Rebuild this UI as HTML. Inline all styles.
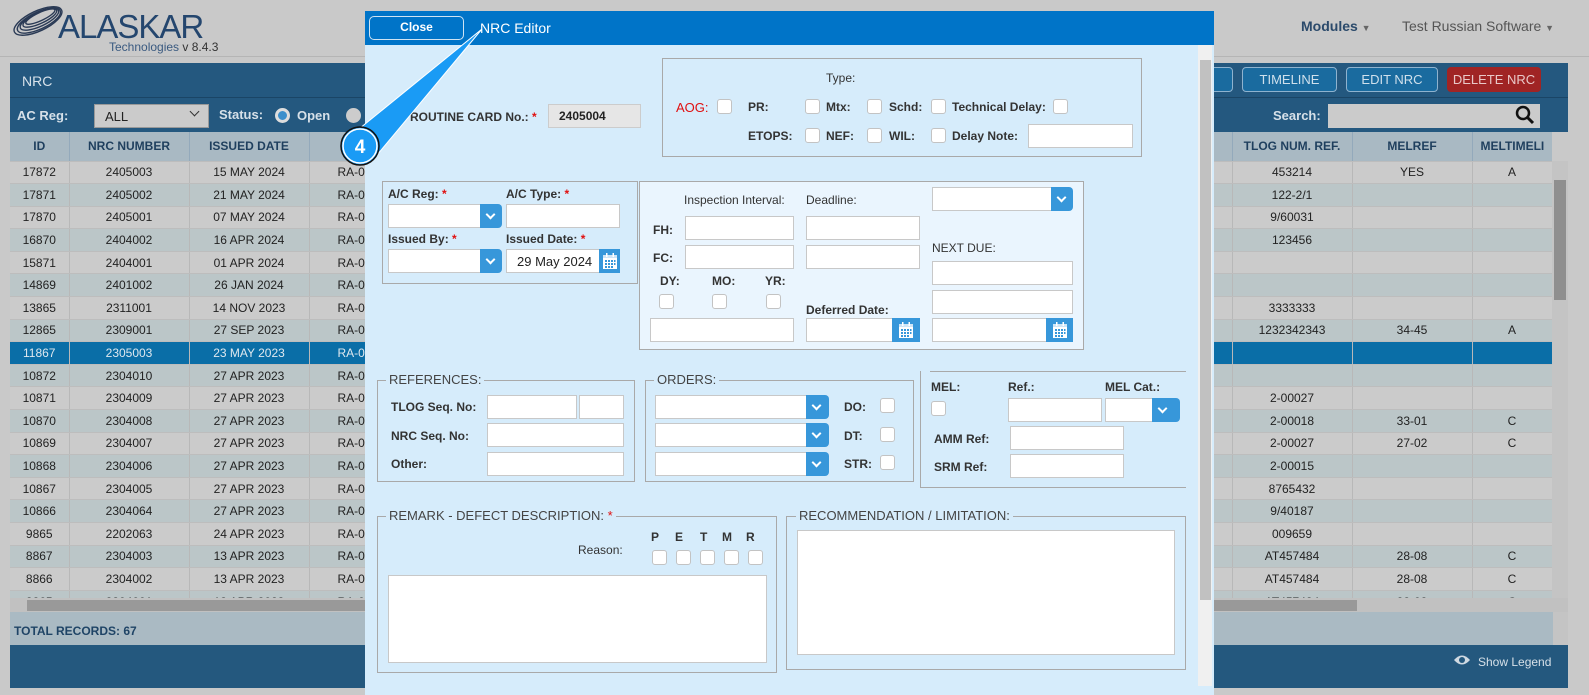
<!DOCTYPE html>
<html><head><meta charset="utf-8">
<style>
*{box-sizing:border-box;margin:0;padding:0}
body{width:1589px;height:695px;overflow:hidden;background:#c9c9c9;font-family:"Liberation Sans",Arial,sans-serif;font-size:12px;color:#222;position:relative}
.a{position:absolute}
.hdr{left:0;top:0;width:1589px;height:57px;background:#c9c9c9;border-bottom:1px solid #b5b5b5}
table{border-collapse:collapse;table-layout:fixed}
td,th{height:22.6px;text-align:center;border-right:1px solid #b8b8b8;border-bottom:1px solid #bdbdbd;font-size:12px;white-space:nowrap;overflow:hidden;padding:0}
th{height:29px;background:#a9b9c3;color:#1f3f5e;font-weight:bold;border-right:1px solid #93a9bb}
tr.g td{background:#cbcbcb}
tr.b td{background:#bbc6c8}
tr.s td{background:#0a6ea7;color:#dfe8ef}
.btn{height:25px;border:1px solid #8fb3cf;border-radius:4px;background:#1a6b9f;color:#cfe0ec;font-size:13px;text-align:center;line-height:23px}
.modal{left:365px;top:11px;width:849px;height:684px;background:#d6ecfb}
.lbl{font-weight:bold;font-size:12px;color:#333;white-space:nowrap}
.r{color:#e01010}
.in{background:#fff;border:1px solid #c8c8c8;height:24px}
.cb{width:15px;height:15px;background:#fff;border:1px solid #c3c3c3;border-radius:3px}
.box{border:1px solid #a9a9a9}
.leg{font-size:13px;color:#444;background:#d6ecfb;padding:0 3px;white-space:nowrap}
.sb{background:#3797da;width:22px;height:24px;border-top-right-radius:4px;border-bottom-right-radius:4px}
.sb::after{content:"";position:absolute;left:7px;top:7px;width:5px;height:5px;border-right:2px solid #fff;border-bottom:2px solid #fff;transform:rotate(45deg)}
.cal{background:#3797da;width:21px;height:24px}
.cal svg{position:absolute;left:50%;top:3px;margin-left:-8px}
</style></head><body>

<div class="a hdr"></div>
<svg class="a" style="left:8px;top:4px" width="60" height="36" viewBox="0 0 60 36">
<g fill="none" stroke="#2a3a55" stroke-width="1.4">
<ellipse cx="30" cy="17" rx="26" ry="10" transform="rotate(-25 30 17)"/>
<ellipse cx="31" cy="17" rx="23.5" ry="8.5" transform="rotate(-25 30 17)"/>
<ellipse cx="32" cy="16" rx="21" ry="7" transform="rotate(-25 30 17)"/>
<ellipse cx="33" cy="15" rx="18.5" ry="5.5" transform="rotate(-25 30 17)"/>
<ellipse cx="34" cy="14" rx="16" ry="4" transform="rotate(-25 30 17)"/>
</g></svg>
<div class="a" style="left:58px;top:10px;font-size:33px;color:#24466e;letter-spacing:-1px;line-height:34px">ALASKAR</div>
<div class="a" style="left:109px;top:40px;font-size:12px;color:#3a5a80">Technologies <span style="color:#333">v 8.4.3</span></div>
<div class="a" style="left:1301px;top:18px;font-size:14px;font-weight:bold;color:#2b4a6b">Modules <span style="font-size:9px;color:#666">▼</span></div>
<div class="a" style="left:1402px;top:18px;font-size:14px;color:#555">Test Russian Software <span style="font-size:9px;color:#666">▼</span></div>

<div class="a" style="left:10px;top:63px;width:1558px;height:35px;background:#24587f;border-bottom:1px solid #1a4566"></div>
<div class="a" style="left:22px;top:73px;font-size:14px;color:#d8e2ea">NRC</div>
<div class="a btn" style="left:1180px;top:67px;width:53px"></div>
<div class="a btn" style="left:1242px;top:67px;width:95px">TIMELINE</div>
<div class="a btn" style="left:1346px;top:67px;width:92px">EDIT NRC</div>
<div class="a btn" style="left:1447px;top:67px;width:94px;background:#a02424;border-color:#a02424;color:#e9c8c8">DELETE NRC</div>
<div class="a" style="left:10px;top:98px;width:1558px;height:34px;background:#24587f"></div>
<div class="a lbl" style="left:17px;top:108px;color:#d6e0e8;font-size:13px">AC Reg:</div>
<div class="a" style="left:94px;top:104px;width:115px;height:24px;background:#cbcbcb;border:1px solid #999;padding:4px 10px;font-size:13px">ALL<span style="position:absolute;right:10px;top:3px;width:7px;height:7px;border-right:1.5px solid #333;border-bottom:1.5px solid #333;transform:rotate(45deg)"></span></div>
<div class="a lbl" style="left:219px;top:107px;color:#d6e0e8;font-size:13px">Status:</div>
<div class="a" style="left:275px;top:108px;width:15px;height:15px;border-radius:50%;background:#3b8fcc;border:3px solid #ddd"></div>
<div class="a lbl" style="left:297px;top:108px;color:#d6e0e8;font-size:13px">Open</div>
<div class="a" style="left:346px;top:108px;width:15px;height:15px;border-radius:50%;background:#ccc"></div>
<div class="a lbl" style="left:1273px;top:108px;color:#d6e0e8;font-size:13px">Search:</div>
<div class="a" style="left:1328px;top:104px;width:212px;height:24px;background:#cbcbcb"></div>
<svg class="a" style="left:1515px;top:105px" width="20" height="20" viewBox="0 0 20 20"><circle cx="8" cy="8" r="6" fill="none" stroke="#111" stroke-width="2.5"/><path d="M12.5 12.5L18 18" stroke="#111" stroke-width="3"/></svg>

<div class="a" style="left:10px;top:132px;width:1542px;height:466px;overflow:hidden">
<table style="width:1542px">
<colgroup><col style="width:59px"><col style="width:120px"><col style="width:120px"><col style="width:923px"><col style="width:120px"><col style="width:120px"><col style="width:80px"></colgroup>
<tr><th>ID</th><th>NRC NUMBER</th><th>ISSUED DATE</th><th></th><th>TLOG NUM. REF.</th><th>MELREF</th><th style="text-align:left;padding-left:8px">MELTIMELI</th></tr>
<tr class="g"><td>17872</td><td>2405003</td><td>15 MAY 2024</td><td style="text-align:left;padding-left:28px">RA-0</td><td>453214</td><td>YES</td><td>A</td></tr>
<tr class="b"><td>17871</td><td>2405002</td><td>21 MAY 2024</td><td style="text-align:left;padding-left:28px">RA-0</td><td>122-2/1</td><td></td><td></td></tr>
<tr class="g"><td>17870</td><td>2405001</td><td>07 MAY 2024</td><td style="text-align:left;padding-left:28px">RA-0</td><td>9/60031</td><td></td><td></td></tr>
<tr class="b"><td>16870</td><td>2404002</td><td>16 APR 2024</td><td style="text-align:left;padding-left:28px">RA-0</td><td>123456</td><td></td><td></td></tr>
<tr class="g"><td>15871</td><td>2404001</td><td>01 APR 2024</td><td style="text-align:left;padding-left:28px">RA-0</td><td></td><td></td><td></td></tr>
<tr class="b"><td>14869</td><td>2401002</td><td>26 JAN 2024</td><td style="text-align:left;padding-left:28px">RA-0</td><td></td><td></td><td></td></tr>
<tr class="g"><td>13865</td><td>2311001</td><td>14 NOV 2023</td><td style="text-align:left;padding-left:28px">RA-0</td><td>3333333</td><td></td><td></td></tr>
<tr class="b"><td>12865</td><td>2309001</td><td>27 SEP 2023</td><td style="text-align:left;padding-left:28px">RA-0</td><td>1232342343</td><td>34-45</td><td>A</td></tr>
<tr class="s"><td>11867</td><td>2305003</td><td>23 MAY 2023</td><td style="text-align:left;padding-left:28px">RA-0</td><td></td><td></td><td></td></tr>
<tr class="b"><td>10872</td><td>2304010</td><td>27 APR 2023</td><td style="text-align:left;padding-left:28px">RA-0</td><td></td><td></td><td></td></tr>
<tr class="g"><td>10871</td><td>2304009</td><td>27 APR 2023</td><td style="text-align:left;padding-left:28px">RA-0</td><td>2-00027</td><td></td><td></td></tr>
<tr class="b"><td>10870</td><td>2304008</td><td>27 APR 2023</td><td style="text-align:left;padding-left:28px">RA-0</td><td>2-00018</td><td>33-01</td><td>C</td></tr>
<tr class="g"><td>10869</td><td>2304007</td><td>27 APR 2023</td><td style="text-align:left;padding-left:28px">RA-0</td><td>2-00027</td><td>27-02</td><td>C</td></tr>
<tr class="b"><td>10868</td><td>2304006</td><td>27 APR 2023</td><td style="text-align:left;padding-left:28px">RA-0</td><td>2-00015</td><td></td><td></td></tr>
<tr class="g"><td>10867</td><td>2304005</td><td>27 APR 2023</td><td style="text-align:left;padding-left:28px">RA-0</td><td>8765432</td><td></td><td></td></tr>
<tr class="b"><td>10866</td><td>2304064</td><td>27 APR 2023</td><td style="text-align:left;padding-left:28px">RA-0</td><td>9/40187</td><td></td><td></td></tr>
<tr class="g"><td>9865</td><td>2202063</td><td>24 APR 2023</td><td style="text-align:left;padding-left:28px">RA-0</td><td>009659</td><td></td><td></td></tr>
<tr class="b"><td>8867</td><td>2304003</td><td>13 APR 2023</td><td style="text-align:left;padding-left:28px">RA-0</td><td>AT457484</td><td>28-08</td><td>C</td></tr>
<tr class="g"><td>8866</td><td>2304002</td><td>13 APR 2023</td><td style="text-align:left;padding-left:28px">RA-0</td><td>AT457484</td><td>28-08</td><td>C</td></tr>
<tr class="b"><td>8865</td><td>2304001</td><td>13 APR 2023</td><td style="text-align:left;padding-left:28px">RA-0</td><td>AT457484</td><td>28-08</td><td>C</td></tr>
</table></div>
<div class="a" style="left:1552px;top:161px;width:16px;height:451px;background:#c4c4c4"></div>
<div class="a" style="left:1554px;top:180px;width:12px;height:120px;background:#8f8f8f"></div>
<div class="a" style="left:10px;top:598px;width:1558px;height:14px;background:#c1c1c1"></div>
<div class="a" style="left:27px;top:600px;width:1330px;height:11px;background:#999"></div>
<div class="a" style="left:10px;top:612px;width:1558px;height:33px;background:#aabac3"></div>
<div class="a" style="left:1553px;top:612px;width:15px;height:33px;background:#c4c4c4"></div>
<div class="a lbl" style="left:14px;top:624px;color:#1f4466">TOTAL RECORDS: 67</div>
<div class="a" style="left:10px;top:645px;width:1558px;height:43px;background:#24587e"></div>
<svg class="a" style="left:1453px;top:654px" width="18" height="12" viewBox="0 0 18 12"><path d="M1 6Q9 -3 17 6Q9 15 1 6Z" fill="#cfd9e2"/><circle cx="9" cy="6" r="3" fill="#24587e"/></svg>
<div class="a" style="left:1478px;top:655px;color:#d6e0e8;font-size:12px">Show Legend</div>

<div class="a modal"></div>
<div class="a" style="left:365px;top:11px;width:849px;height:34px;background:#0074c8"></div>
<div class="a" style="left:369px;top:16px;width:95px;height:24px;border:1px solid #cfe3f3;border-radius:5px;color:#fff;font-weight:bold;text-align:center;line-height:21px">Close</div>
<div class="a" style="left:480px;top:20px;color:#fff;font-size:14px">NRC Editor</div>
<div class="a" style="left:1198px;top:45px;width:14px;height:641px;background:#f0f0f0"></div>
<div class="a" style="left:1200px;top:60px;width:11px;height:540px;background:#c1c1c1"></div>

<div class="a lbl" style="left:410px;top:110px">ROUTINE CARD No.: <span class="r">*</span></div>
<div class="a" style="left:548px;top:104px;width:93px;height:24px;background:#e6e6e6;border:1px solid #ccc;padding:4px 10px;font-weight:bold">2405004</div>

<div class="a box" style="left:662px;top:58px;width:480px;height:99px"></div>
<div class="a" style="left:826px;top:71px;color:#333">Type:</div>
<div class="a lbl r" style="left:676px;top:100px;font-weight:normal;font-size:13px">AOG:</div><div class="a cb" style="left:717px;top:99px"></div>
<div class="a lbl" style="left:748px;top:100px">PR:</div><div class="a cb" style="left:805px;top:99px"></div>
<div class="a lbl" style="left:826px;top:100px">Mtx:</div><div class="a cb" style="left:867px;top:99px"></div>
<div class="a lbl" style="left:889px;top:100px">Schd:</div><div class="a cb" style="left:931px;top:99px"></div>
<div class="a lbl" style="left:952px;top:100px">Technical Delay:</div><div class="a cb" style="left:1053px;top:99px"></div>
<div class="a lbl" style="left:748px;top:129px">ETOPS:</div><div class="a cb" style="left:805px;top:128px"></div>
<div class="a lbl" style="left:826px;top:129px">NEF:</div><div class="a cb" style="left:867px;top:128px"></div>
<div class="a lbl" style="left:889px;top:129px">WIL:</div><div class="a cb" style="left:931px;top:128px"></div>
<div class="a lbl" style="left:952px;top:129px">Delay Note:</div><div class="a in" style="left:1028px;top:124px;width:105px"></div>

<div class="a box" style="left:382px;top:181px;width:256px;height:103px"></div>
<div class="a lbl" style="left:388px;top:187px">A/C Reg: <span class="r">*</span></div>
<div class="a lbl" style="left:506px;top:187px">A/C Type: <span class="r">*</span></div>
<div class="a in" style="left:388px;top:204px;width:93px"></div><div class="a sb" style="left:480px;top:204px"></div>
<div class="a in" style="left:506px;top:204px;width:114px"></div>
<div class="a lbl" style="left:388px;top:232px">Issued By: <span class="r">*</span></div>
<div class="a lbl" style="left:506px;top:232px">Issued Date: <span class="r">*</span></div>
<div class="a in" style="left:388px;top:249px;width:93px"></div><div class="a sb" style="left:480px;top:249px"></div>
<div class="a in" style="left:506px;top:249px;width:94px;padding:4px 0 0 10px;font-size:13px">29 May 2024</div>
<div class="a cal" style="left:599px;top:249px"><svg width="16" height="18" viewBox="0 0 16 18"><rect x="1" y="3" width="14" height="14" fill="#fff"/><rect x="1" y="3" width="14" height="3" fill="#cfe6f7"/><g fill="#3797da"><rect x="3" y="8" width="2" height="2"/><rect x="6" y="8" width="2" height="2"/><rect x="9" y="8" width="2" height="2"/><rect x="12" y="8" width="1.5" height="2"/><rect x="3" y="11" width="2" height="2"/><rect x="6" y="11" width="2" height="2"/><rect x="9" y="11" width="2" height="2"/><rect x="12" y="11" width="1.5" height="2"/><rect x="3" y="14" width="2" height="2"/><rect x="6" y="14" width="2" height="2"/><rect x="9" y="14" width="2" height="2"/></g><rect x="4" y="1" width="1.5" height="4" fill="#fff"/><rect x="10.5" y="1" width="1.5" height="4" fill="#fff"/></svg></div>

<div class="a box" style="left:639px;top:181px;width:445px;height:169px;background:#eaf5fe"></div>
<div class="a" style="left:684px;top:193px;color:#333">Inspection Interval:</div>
<div class="a" style="left:806px;top:193px;color:#333">Deadline:</div>
<div class="a in" style="left:932px;top:187px;width:120px"></div><div class="a sb" style="left:1051px;top:187px"></div>
<div class="a lbl" style="left:653px;top:223px">FH:</div><div class="a in" style="left:685px;top:216px;width:109px"></div><div class="a in" style="left:806px;top:216px;width:114px"></div>
<div class="a lbl" style="left:653px;top:251px">FC:</div><div class="a in" style="left:685px;top:245px;width:109px"></div><div class="a in" style="left:806px;top:245px;width:114px"></div>
<div class="a" style="left:932px;top:241px;color:#333">NEXT DUE:</div>
<div class="a lbl" style="left:660px;top:274px">DY:</div><div class="a lbl" style="left:712px;top:274px">MO:</div><div class="a lbl" style="left:765px;top:274px">YR:</div>
<div class="a cb" style="left:659px;top:294px"></div><div class="a cb" style="left:712px;top:294px"></div><div class="a cb" style="left:766px;top:294px"></div>
<div class="a in" style="left:932px;top:261px;width:141px"></div>
<div class="a in" style="left:932px;top:290px;width:141px"></div>
<div class="a lbl" style="left:806px;top:303px">Deferred Date:</div>
<div class="a in" style="left:650px;top:318px;width:144px"></div>
<div class="a in" style="left:806px;top:318px;width:87px"></div>
<div class="a cal" style="left:892px;top:318px;width:28px"><svg width="16" height="18" viewBox="0 0 16 18"><rect x="1" y="3" width="14" height="14" fill="#fff"/><rect x="1" y="3" width="14" height="3" fill="#cfe6f7"/><g fill="#3797da"><rect x="3" y="8" width="2" height="2"/><rect x="6" y="8" width="2" height="2"/><rect x="9" y="8" width="2" height="2"/><rect x="12" y="8" width="1.5" height="2"/><rect x="3" y="11" width="2" height="2"/><rect x="6" y="11" width="2" height="2"/><rect x="9" y="11" width="2" height="2"/><rect x="12" y="11" width="1.5" height="2"/><rect x="3" y="14" width="2" height="2"/><rect x="6" y="14" width="2" height="2"/><rect x="9" y="14" width="2" height="2"/></g><rect x="4" y="1" width="1.5" height="4" fill="#fff"/><rect x="10.5" y="1" width="1.5" height="4" fill="#fff"/></svg></div>
<div class="a in" style="left:932px;top:318px;width:115px"></div>
<div class="a cal" style="left:1046px;top:318px;width:27px"><svg width="16" height="18" viewBox="0 0 16 18"><rect x="1" y="3" width="14" height="14" fill="#fff"/><rect x="1" y="3" width="14" height="3" fill="#cfe6f7"/><g fill="#3797da"><rect x="3" y="8" width="2" height="2"/><rect x="6" y="8" width="2" height="2"/><rect x="9" y="8" width="2" height="2"/><rect x="12" y="8" width="1.5" height="2"/><rect x="3" y="11" width="2" height="2"/><rect x="6" y="11" width="2" height="2"/><rect x="9" y="11" width="2" height="2"/><rect x="12" y="11" width="1.5" height="2"/><rect x="3" y="14" width="2" height="2"/><rect x="6" y="14" width="2" height="2"/><rect x="9" y="14" width="2" height="2"/></g><rect x="4" y="1" width="1.5" height="4" fill="#fff"/><rect x="10.5" y="1" width="1.5" height="4" fill="#fff"/></svg></div>

<div class="a box" style="left:377px;top:380px;width:258px;height:102px"></div>
<div class="a leg" style="left:386px;top:372px">REFERENCES:</div>
<div class="a lbl" style="left:391px;top:400px">TLOG Seq. No:</div><div class="a in" style="left:487px;top:395px;width:90px"></div><div class="a in" style="left:579px;top:395px;width:45px"></div>
<div class="a lbl" style="left:391px;top:429px">NRC Seq. No:</div><div class="a in" style="left:487px;top:423px;width:137px"></div>
<div class="a lbl" style="left:391px;top:457px">Other:</div><div class="a in" style="left:487px;top:452px;width:137px"></div>

<div class="a box" style="left:645px;top:380px;width:269px;height:102px"></div>
<div class="a leg" style="left:654px;top:372px">ORDERS:</div>
<div class="a in" style="left:655px;top:395px;width:152px"></div><div class="a sb" style="left:806px;top:395px;width:23px"></div>
<div class="a in" style="left:655px;top:423px;width:152px"></div><div class="a sb" style="left:806px;top:423px;width:23px"></div>
<div class="a in" style="left:655px;top:452px;width:152px"></div><div class="a sb" style="left:806px;top:452px;width:23px"></div>
<div class="a lbl" style="left:844px;top:400px">DO:</div><div class="a cb" style="left:880px;top:398px"></div>
<div class="a lbl" style="left:844px;top:429px">DT:</div><div class="a cb" style="left:880px;top:427px"></div>
<div class="a lbl" style="left:844px;top:457px">STR:</div><div class="a cb" style="left:880px;top:455px"></div>

<div class="a" style="left:920px;top:371px;width:266px;height:117px;border-left:1px solid #a9a9a9;border-bottom:1px solid #a9a9a9"></div>
<div class="a" style="left:930px;top:371px;width:256px;height:1px;background:#a9a9a9"></div>
<div class="a lbl" style="left:931px;top:380px">MEL:</div><div class="a lbl" style="left:1008px;top:380px">Ref.:</div><div class="a lbl" style="left:1105px;top:380px">MEL Cat.:</div>
<div class="a cb" style="left:931px;top:401px"></div>
<div class="a in" style="left:1008px;top:398px;width:94px"></div>
<div class="a in" style="left:1105px;top:398px;width:48px"></div><div class="a sb" style="left:1152px;top:398px;width:28px"></div>
<div class="a lbl" style="left:934px;top:432px">AMM Ref:</div><div class="a in" style="left:1010px;top:426px;width:114px"></div>
<div class="a lbl" style="left:934px;top:460px">SRM Ref:</div><div class="a in" style="left:1010px;top:454px;width:114px"></div>

<div class="a box" style="left:377px;top:516px;width:400px;height:157px"></div>
<div class="a leg" style="left:386px;top:508px">REMARK - DEFECT DESCRIPTION: <span class="r">*</span></div>
<div class="a lbl" style="left:651px;top:530px">P</div><div class="a lbl" style="left:675px;top:530px">E</div><div class="a lbl" style="left:700px;top:530px">T</div><div class="a lbl" style="left:722px;top:530px">M</div><div class="a lbl" style="left:746px;top:530px">R</div>
<div class="a" style="left:578px;top:543px;color:#333">Reason:</div>
<div class="a cb" style="left:652px;top:550px"></div><div class="a cb" style="left:676px;top:550px"></div><div class="a cb" style="left:700px;top:550px"></div><div class="a cb" style="left:724px;top:550px"></div><div class="a cb" style="left:748px;top:550px"></div>
<div class="a in" style="left:388px;top:575px;width:379px;height:88px"></div>
<div class="a box" style="left:786px;top:516px;width:400px;height:154px"></div>
<div class="a leg" style="left:796px;top:508px">RECOMMENDATION / LIMITATION:</div>
<div class="a in" style="left:797px;top:530px;width:378px;height:125px"></div>

<svg class="a" style="left:330px;top:15px" width="170" height="170" viewBox="0 0 170 170">
<path d="M24 118L152 14L42 146Z" fill="#1a9bf5" stroke="#fff" stroke-width="1"/>
<circle cx="30" cy="131" r="19" fill="#1a9bf5" stroke="#111" stroke-width="1.5"/>
<circle cx="30" cy="131" r="17" fill="none" stroke="#fff" stroke-width="1.5"/>
<text x="30" y="138" text-anchor="middle" font-family="Liberation Sans" font-weight="bold" font-size="19" fill="#fff">4</text>
</svg>
</body></html>
